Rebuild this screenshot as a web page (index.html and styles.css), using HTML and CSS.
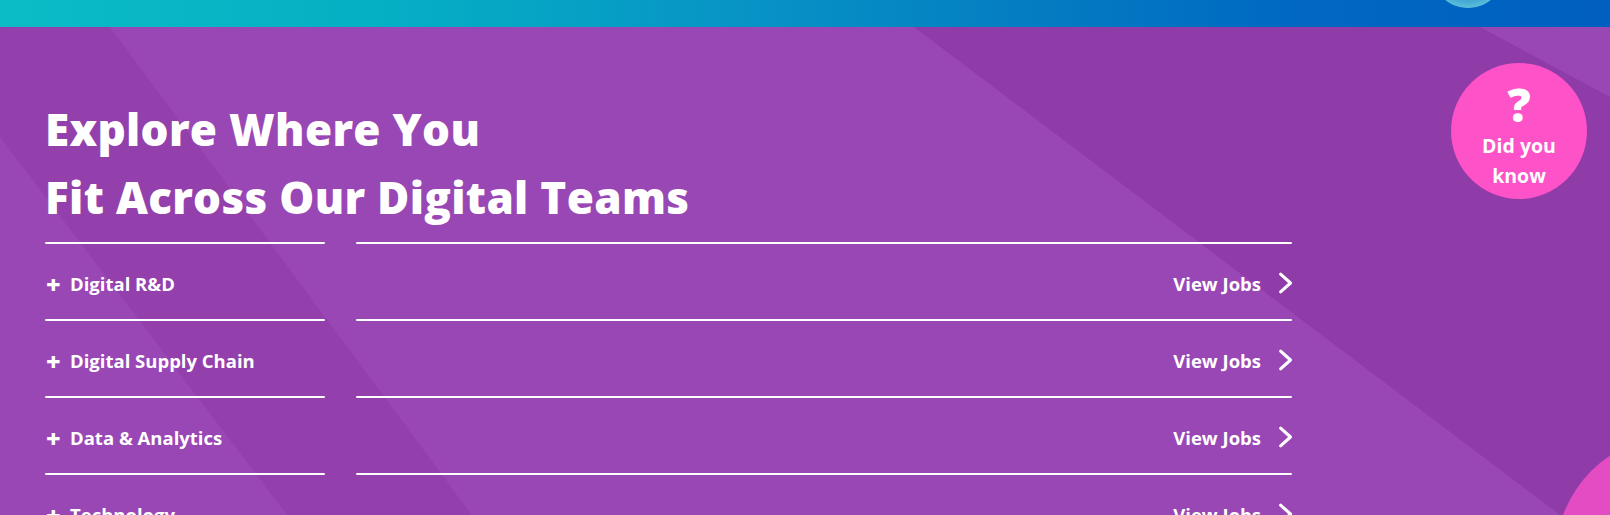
FILE: index.html
```html
<!DOCTYPE html>
<html lang="en">
<head>
<meta charset="utf-8">
<title>Explore Where You Fit</title>
<link rel="stylesheet" href="styles.css">
</head>
<body>
  <div class="topbar"><span class="topbar-orb"></span></div>
  <section class="teams">
    <div class="band band-left"></div>
    <div class="band band-right"></div>
    <div class="corner-orb"></div>
    <a class="did-you-know" href="#">
      <span class="dyk-q">?</span>
      <span class="dyk-text">Did you<br>know</span>
    </a>
    <div class="content">
      <h2 class="title">Explore Where You<br>Fit Across Our Digital Teams</h2>
      <ul class="team-list">
        <li class="team-row">
          <div class="team-name"><span class="plus">+</span>Digital R&amp;D</div>
          <a class="view-jobs" href="#">View Jobs <svg class="chev" viewBox="0 0 14 20" width="14" height="20"><polyline points="3,2 12,10 3,18" fill="none" stroke="#fff" stroke-width="2.8" stroke-linecap="round" stroke-linejoin="round"/></svg></a>
        </li>
        <li class="team-row">
          <div class="team-name"><span class="plus">+</span>Digital Supply Chain</div>
          <a class="view-jobs" href="#">View Jobs <svg class="chev" viewBox="0 0 14 20" width="14" height="20"><polyline points="3,2 12,10 3,18" fill="none" stroke="#fff" stroke-width="2.8" stroke-linecap="round" stroke-linejoin="round"/></svg></a>
        </li>
        <li class="team-row">
          <div class="team-name"><span class="plus">+</span>Data &amp; Analytics</div>
          <a class="view-jobs" href="#">View Jobs <svg class="chev" viewBox="0 0 14 20" width="14" height="20"><polyline points="3,2 12,10 3,18" fill="none" stroke="#fff" stroke-width="2.8" stroke-linecap="round" stroke-linejoin="round"/></svg></a>
        </li>
        <li class="team-row">
          <div class="team-name"><span class="plus">+</span>Technology</div>
          <a class="view-jobs" href="#">View Jobs <svg class="chev" viewBox="0 0 14 20" width="14" height="20"><polyline points="3,2 12,10 3,18" fill="none" stroke="#fff" stroke-width="2.8" stroke-linecap="round" stroke-linejoin="round"/></svg></a>
        </li>
      </ul>
    </div>
  </section>
</body>
</html>
```

FILE: styles.css
```css
* { box-sizing: border-box; }
html, body { margin: 0; padding: 0; }
body {
  width: 1610px;
  height: 515px;
  overflow: hidden;
  font-family: "Open Sans", "Noto Sans", sans-serif;
  color: #fff;
  background: #9a47b6;
}
.topbar {
  position: relative;
  height: 27px;
  background: linear-gradient(90deg, #0bbcc6 0%, #05aec4 25%, #0795c6 45%, #0582c2 60%, #0068c2 80%, #005fc0 100%);
  overflow: hidden;
}
.topbar-orb {
  position: absolute;
  left: 1432px;
  top: -64px;
  width: 72px;
  height: 72px;
  border-radius: 50%;
  background: #3da3d2;
  box-shadow: inset 0 -4px 6px #5fc0da;
}
.teams {
  position: relative;
  height: 488px;
  overflow: hidden;
  background: #9a47b6;
}
.band {
  position: absolute;
  inset: 0;
}
.band-left {
  clip-path: polygon(0 0, 110px 0, 472px 488px, 287px 488px, 0 110px);
  background: #9440ac;
}
.band-right {
  clip-path: polygon(914px 0, 1480px 0, 1610px 70px, 1610px 488px, 1560px 488px);
  background: #8f3ba8;
}
.corner-orb {
  position: absolute;
  left: 1555px;
  top: 407px;
  width: 250px;
  height: 250px;
  border-radius: 50%;
  background: #e44cc4;
}
.did-you-know {
  position: absolute;
  left: 1451px;
  top: 36px;
  width: 136px;
  height: 136px;
  border-radius: 50%;
  background: #fd52c8;
  color: #fff;
  text-decoration: none;
  display: flex;
  flex-direction: column;
  align-items: center;
  justify-content: center;
  z-index: 2;
}
.dyk-q {
  font-size: 46px;
  line-height: 42px;
  font-weight: 800;
  margin-top: 12px;
}
.dyk-text {
  font-size: 19.5px;
  line-height: 30px;
  text-align: center;
  font-weight: 700;
  margin-top: 6px;
}
.content {
  position: relative;
  z-index: 1;
  padding: 68px 0 0 45px;
}
.title {
  margin: 0;
  font-size: 44px;
  line-height: 68px;
  font-weight: 800;
  letter-spacing: 0.3px;
}
.team-list {
  list-style: none;
  margin: 11px 0 0;
  padding: 0;
  width: 1247px;
}
.team-row {
  display: grid;
  grid-template-columns: 280px 1fr;
  column-gap: 31px;
  height: 77px;
  position: relative;
}
.team-row::before,
.team-row::after {
  content: "";
  position: absolute;
  top: 0;
  height: 2px;
  background: #fff;
  border-radius: 1px;
}
.team-row::before { left: 0; width: 280px; }
.team-row::after { left: 311px; right: 0; }
.team-name {
  display: flex;
  align-items: center;
  font-size: 18.5px;
  font-weight: 700;
  padding-top: 5px;
}
.plus {
  font-size: 25px;
  font-weight: 800;
  width: 24px;
  margin-left: 1px;
  margin-top: 1px;
}
.view-jobs {
  display: flex;
  align-items: center;
  justify-content: flex-end;
  gap: 16px;
  color: #fff;
  text-decoration: none;
  font-size: 18.5px;
  font-weight: 700;
  padding-top: 5px;
}
.chev { display: block; width: 16px; height: 22px; margin-right: -1px; }
```
